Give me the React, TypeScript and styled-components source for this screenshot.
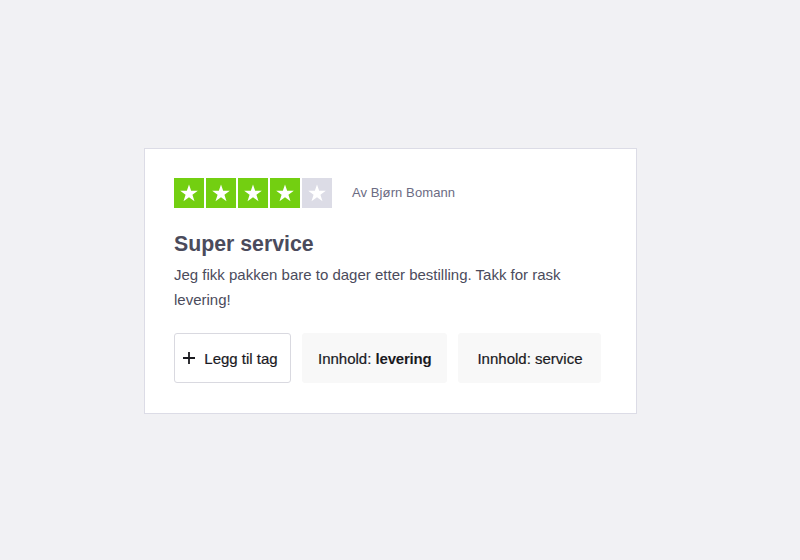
import styled, { createGlobalStyle } from "styled-components";

const GlobalStyle = createGlobalStyle`
  html, body {
    margin: 0;
    padding: 0;
    background: #f1f1f4;
    font-family: "Liberation Sans", Arial, sans-serif;
  }
`;

const Page = styled.div`
  width: 800px;
  height: 560px;
  box-sizing: border-box;
  padding: 148px 0 0 144px;
`;

const Card = styled.div`
  width: 493px;
  box-sizing: border-box;
  background: #ffffff;
  border: 1px solid #dcdce6;
  padding: 29px 28px 30px 29px;
`;

const Header = styled.div`
  display: flex;
  align-items: center;
  gap: 20px;
`;

const Stars = styled.div`
  display: flex;
  gap: 2px;
`;

const StarBox = styled.div<{ $on: boolean }>`
  width: 30px;
  height: 30px;
  background: ${({ $on }) => ($on ? "#73cf11" : "#dcdce6")};
  display: flex;
  align-items: center;
  justify-content: center;
`;

const Author = styled.span`
  font-size: 13px;
  line-height: 14px;
  margin-top: -1px;
  color: #6b6b83;
  letter-spacing: 0.1px;
`;

const Title = styled.h2`
  margin: 23px 0 0;
  font-size: 21.3px;
  line-height: 26px;
  font-weight: 700;
  color: #4b4b5c;
`;

const Body = styled.p`
  margin: 5px 0 0;
  font-size: 15px;
  line-height: 25px;
  color: #4b4b5c;
  max-width: 400px;
`;

const Tags = styled.div`
  display: flex;
  gap: 11px;
  margin-top: 21px;
`;

const TagButton = styled.button<{ $add?: boolean }>`
  height: 50px;
  box-sizing: border-box;
  min-width: ${({ $add }) => ($add ? "117px" : "143px")};
  display: flex;
  align-items: center;
  justify-content: center;
  gap: 8px;
  padding: ${({ $add }) => ($add ? "0 12px 0 7px" : "0 15px")};
  border-radius: 3px;
  border: ${({ $add }) => ($add ? "1px solid #d9d9e0" : "1px solid #f8f8f8")};
  background: ${({ $add }) => ($add ? "#ffffff" : "#f8f8f8")};
  font-family: "Liberation Sans", Arial, sans-serif;
  font-size: 15px;
  color: #1a1a1f;
  -webkit-text-stroke: 0.2px #1a1a1f;
  cursor: pointer;
`;

const TagValue = styled.b`
  font-weight: 700;
  letter-spacing: -0.2px;
  -webkit-text-stroke: 0;
`;

function Star() {
  return (
    <svg width="20" height="20" viewBox="0 0 24 24">
      <path
        d="M12 1.8l2.6 7.6h8l-6.5 4.7 2.5 7.7L12 17.1l-6.6 4.7 2.5-7.7L1.4 9.4h8z"
        fill="#ffffff"
      />
    </svg>
  );
}

function Plus() {
  return (
    <svg width="14" height="14" viewBox="0 0 14 14">
      <path d="M7 1v12M1 7h12" stroke="#1a1a1f" strokeWidth="1.8" />
    </svg>
  );
}

export default function App() {
  const rating = 4;
  return (
    <Page>
      <GlobalStyle />
      <Card>
        <Header>
          <Stars>
            {[1, 2, 3, 4, 5].map((n) => (
              <StarBox key={n} $on={n <= rating}>
                <Star />
              </StarBox>
            ))}
          </Stars>
          <Author>Av Bjørn Bomann</Author>
        </Header>
        <Title>Super service</Title>
        <Body>Jeg fikk pakken bare to dager etter bestilling. Takk for rask levering!</Body>
        <Tags>
          <TagButton $add>
            <Plus />
            <span>Legg til tag</span>
          </TagButton>
          <TagButton>
            <span>
              Innhold: <TagValue>levering</TagValue>
            </span>
          </TagButton>
          <TagButton>
            <span>Innhold: service</span>
          </TagButton>
        </Tags>
      </Card>
    </Page>
  );
}
